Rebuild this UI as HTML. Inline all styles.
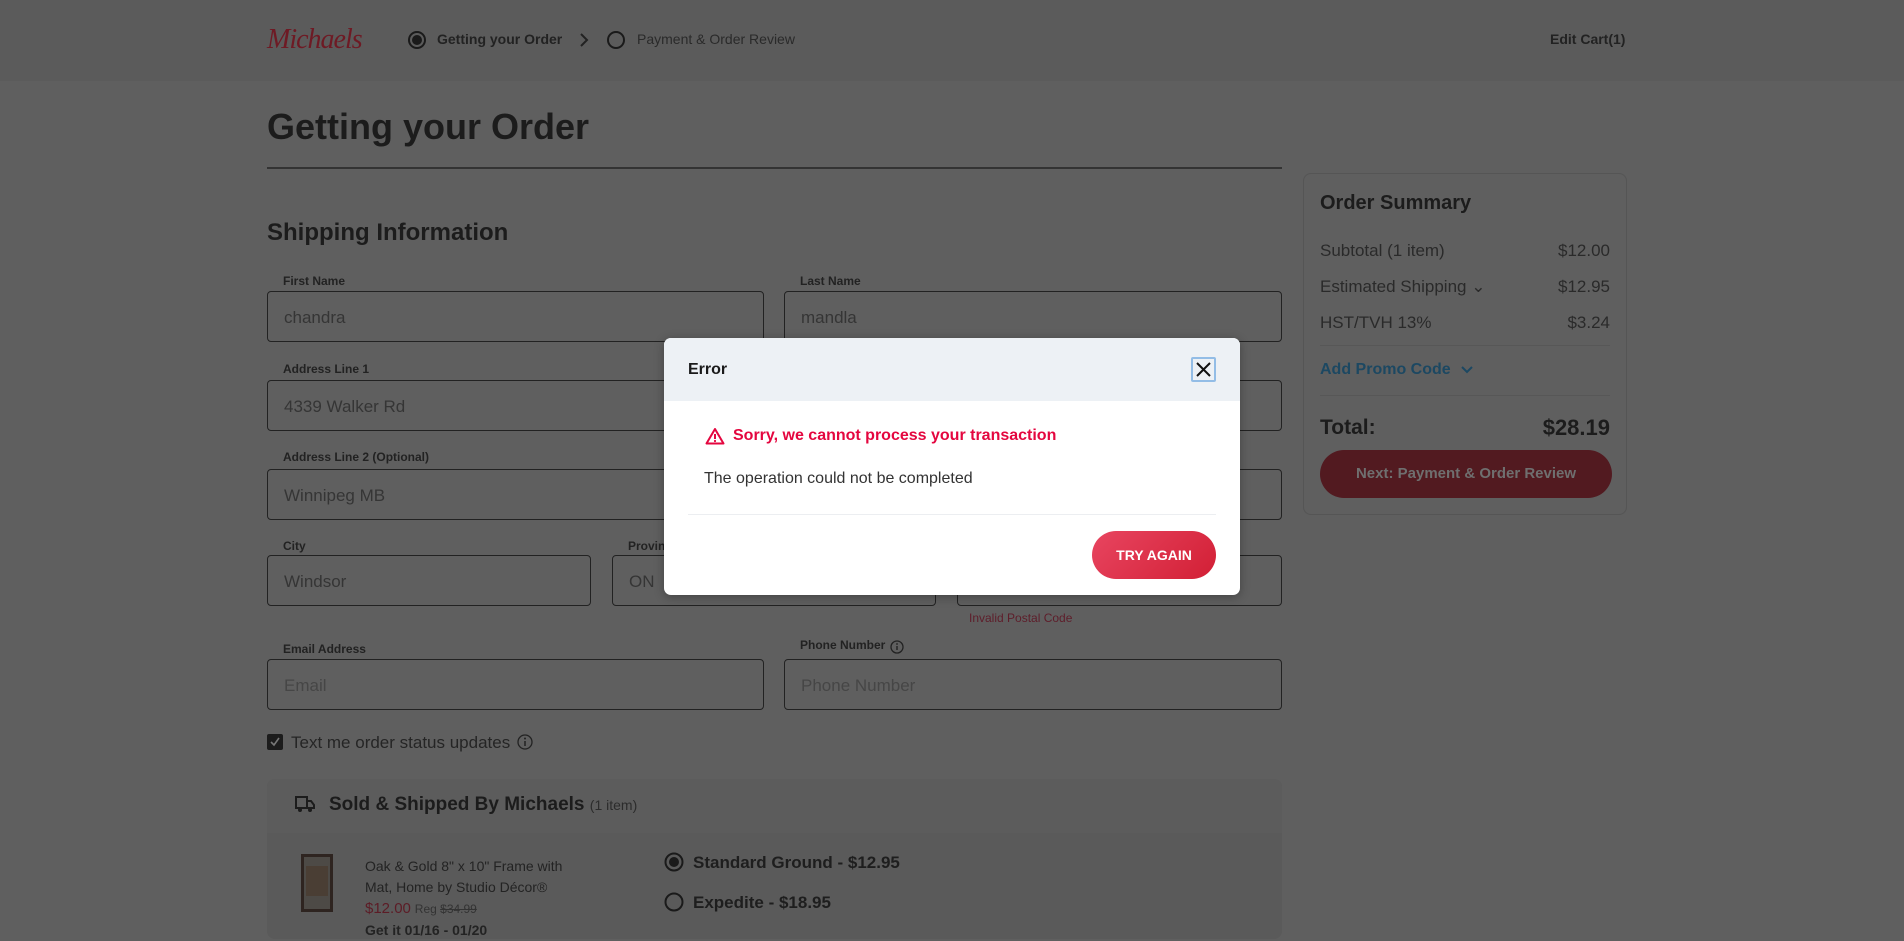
<!DOCTYPE html>
<html><head><meta charset="utf-8"><style>
*{box-sizing:border-box;margin:0;padding:0}
body{width:1904px;height:933px;overflow:hidden;background:#5f5f5f;font-family:"Liberation Sans",sans-serif;color:#1e1e1e;position:relative}
.a{position:absolute}
.hdr{left:0;top:0;width:1904px;height:81px;background:#5b5b5b}
.lbl{font-size:12px;font-weight:bold;color:#222}
.inp{border:1px solid #222;border-radius:4px;height:51px;font-size:17px;color:#353535;padding:16px 0 0 16px}
.ph{color:#464646}
.row{font-size:17px;color:#2a2a2a}
</style></head><body>
<div class="a hdr"></div>
<div class="a" style="left:267px;top:24px;font-family:'Liberation Serif',serif;font-style:italic;font-size:28px;letter-spacing:-1px;color:#6e1a24">Michaels</div>
<svg class="a" style="left:407px;top:30px" width="20" height="20"><circle cx="10" cy="10" r="8" fill="none" stroke="#1a1a1a" stroke-width="2"/><circle cx="10" cy="10" r="5" fill="#1a1a1a"/></svg>
<div class="a" style="left:437px;top:31px;font-size:14px;font-weight:bold;color:#222">Getting your Order</div>
<svg class="a" style="left:578px;top:32px" width="12" height="16"><path d="M3 2l6 6-6 6" fill="none" stroke="#222" stroke-width="2"/></svg>
<svg class="a" style="left:606px;top:30px" width="20" height="20"><circle cx="10" cy="10" r="8" fill="none" stroke="#1a1a1a" stroke-width="2"/></svg>
<div class="a" style="left:637px;top:31px;font-size:14px;color:#2a2a2a">Payment &amp; Order Review</div>
<div class="a" style="left:1550px;top:31px;font-size:14px;font-weight:bold;color:#222">Edit Cart(1)</div>

<div class="a" style="left:267px;top:106px;font-size:36px;font-weight:bold;color:#1c1c1c">Getting your Order</div>
<div class="a" style="left:267px;top:167px;width:1015px;height:2px;background:#333"></div>
<div class="a" style="left:267px;top:219px;font-size:24px;font-weight:bold;color:#1c1c1c">Shipping Information</div>

<div class="a lbl" style="left:283px;top:274px">First Name</div>
<div class="a inp" style="left:267px;top:291px;width:497px">chandra</div>
<div class="a lbl" style="left:800px;top:274px">Last Name</div>
<div class="a inp" style="left:784px;top:291px;width:498px">mandla</div>
<div class="a lbl" style="left:283px;top:362px">Address Line 1</div>
<div class="a inp" style="left:267px;top:380px;width:1015px">4339 Walker Rd</div>
<div class="a lbl" style="left:283px;top:450px">Address Line 2 (Optional)</div>
<div class="a inp" style="left:267px;top:469px;width:1015px">Winnipeg MB</div>
<div class="a lbl" style="left:283px;top:539px">City</div>
<div class="a inp" style="left:267px;top:555px;width:324px">Windsor</div>
<div class="a lbl" style="left:628px;top:539px">Province</div>
<div class="a inp" style="left:612px;top:555px;width:324px">ON</div>
<div class="a inp" style="left:957px;top:555px;width:325px"></div>
<div class="a" style="left:969px;top:611px;font-size:12px;color:#5e1d2a">Invalid Postal Code</div>
<div class="a lbl" style="left:283px;top:642px">Email Address</div>
<div class="a inp ph" style="left:267px;top:659px;width:497px">Email</div>
<div class="a lbl" style="left:800px;top:638px">Phone Number</div>
<svg class="a" style="left:890px;top:640px" width="14" height="14"><circle cx="7" cy="7" r="6" fill="none" stroke="#222" stroke-width="1.3"/><path d="M7 6v4" stroke="#222" stroke-width="1.4"/><circle cx="7" cy="4" r=".9" fill="#222"/></svg>
<div class="a inp ph" style="left:784px;top:659px;width:498px">Phone Number</div>
<div class="a" style="left:267px;top:734px;width:16px;height:16px;background:#1c1c1c;border-radius:2px"></div>
<svg class="a" style="left:269px;top:736px" width="12" height="12"><path d="M2 6l3 3 5-7" fill="none" stroke="#777" stroke-width="1.6"/></svg>
<div class="a" style="left:291px;top:733px;font-size:17px;color:#252525">Text me order status updates</div>
<svg class="a" style="left:517px;top:734px" width="16" height="16"><circle cx="8" cy="8" r="7" fill="none" stroke="#222" stroke-width="1.3"/><path d="M8 7v5" stroke="#222" stroke-width="1.5"/><circle cx="8" cy="4.5" r="1" fill="#222"/></svg>

<div class="a" style="left:267px;top:779px;width:1015px;height:160px;background:#5a5a5a;border-radius:8px"></div>
<div class="a" style="left:267px;top:779px;width:1015px;height:54px;background:#5c5c5c;border-radius:8px 8px 0 0"></div>
<svg class="a" style="left:294px;top:794px" width="22" height="20"><path d="M2 3h11v11H2zM13 7h4l3 4v3h-7" fill="none" stroke="#1c1c1c" stroke-width="2"/><circle cx="6" cy="16" r="2" fill="#1c1c1c"/><circle cx="16" cy="16" r="2" fill="#1c1c1c"/></svg>
<div class="a" style="left:329px;top:794px;font-size:19px;font-weight:bold;color:#1c1c1c">Sold &amp; Shipped By Michaels <span style="font-size:14px;font-weight:normal;color:#2c2c2c">(1 item)</span></div>
<div class="a" style="left:301px;top:854px;width:32px;height:58px;border:3px solid #2e2420;background:#4d4a46"></div>
<div class="a" style="left:306px;top:866px;width:22px;height:30px;background:#4a3e34"></div>
<div class="a" style="left:365px;top:856px;font-size:14px;line-height:21px;color:#232323">Oak &amp; Gold 8" x 10" Frame with<br>Mat, Home by Studio Décor®<br><span style="color:#5c1c26;font-size:15px">$12.00</span> <span style="font-size:12px;color:#333">Reg <s>$34.99</s></span><br><b>Get it 01/16 - 01/20</b></div>
<svg class="a" style="left:664px;top:852px" width="20" height="20"><circle cx="10" cy="10" r="8.5" fill="none" stroke="#1a1a1a" stroke-width="2"/><circle cx="10" cy="10" r="5" fill="#1a1a1a"/></svg>
<div class="a" style="left:693px;top:853px;font-size:17px;font-weight:bold;color:#1e1e1e">Standard Ground - $12.95</div>
<svg class="a" style="left:664px;top:892px" width="20" height="20"><circle cx="10" cy="10" r="8.5" fill="none" stroke="#1a1a1a" stroke-width="2"/></svg>
<div class="a" style="left:693px;top:893px;font-size:17px;font-weight:bold;color:#1e1e1e">Expedite - $18.95</div>

<div class="a" style="left:1303px;top:173px;width:324px;height:342px;border:1px solid #555;border-radius:8px"></div>
<div class="a" style="left:1320px;top:192px;font-size:20px;font-weight:bold;color:#1c1c1c">Order Summary</div>
<div class="a row" style="left:1320px;top:241px">Subtotal (1 item)</div><div class="a row" style="left:1400px;width:210px;text-align:right;top:241px">$12.00</div>
<div class="a row" style="left:1320px;top:277px">Estimated Shipping ⌄</div><div class="a row" style="left:1400px;width:210px;text-align:right;top:277px">$12.95</div>
<div class="a row" style="left:1320px;top:313px">HST/TVH 13%</div><div class="a row" style="left:1400px;width:210px;text-align:right;top:313px">$3.24</div>
<div class="a" style="left:1320px;top:345px;width:290px;height:1px;background:#575757"></div>
<div class="a" style="left:1320px;top:361px;font-size:16px;font-weight:bold;color:#1c4862">Add Promo Code</div>
<svg class="a" style="left:1460px;top:364px" width="14" height="12"><path d="M2 3l5 5 5-5" fill="none" stroke="#1c4862" stroke-width="2"/></svg>
<div class="a" style="left:1320px;top:395px;width:290px;height:1px;background:#575757"></div>
<div class="a" style="left:1320px;top:416px;font-size:21px;font-weight:bold;color:#1c1c1c">Total:</div>
<div class="a" style="left:1450px;width:160px;text-align:right;top:415px;font-size:22px;font-weight:bold;color:#1c1c1c">$28.19</div>
<div class="a" style="left:1320px;top:450px;width:292px;height:48px;border-radius:24px;background:#521a20;color:#6f6f6f;font-size:15px;font-weight:bold;text-align:center;line-height:48px">Next: Payment &amp; Order Review</div>

<div class="a" style="left:664px;top:338px;width:576px;height:257px;background:#fff;border-radius:7px;overflow:hidden;box-shadow:0 2px 10px rgba(0,0,0,.3)">
 <div style="height:63px;background:#edf1f5;position:relative">
  <div class="a" style="left:24px;top:23px;font-size:16px;font-weight:bold;color:#1a1a1a">Error</div>
  <div class="a" style="left:527px;top:19px;width:25px;height:25px;border:2px solid #93bde6;border-radius:2px"></div>
  <svg class="a" style="left:531px;top:23px" width="17" height="17"><path d="M2 2l13 13M15 2L2 15" stroke="#111" stroke-width="2"/></svg>
 </div>
 <svg class="a" style="left:41px;top:89px" width="20" height="18"><path d="M10 2L1.5 16.5h17z" fill="none" stroke="#e4063f" stroke-width="2" stroke-linejoin="round"/><path d="M10 7v5" stroke="#e4063f" stroke-width="2"/><circle cx="10" cy="14" r="1.1" fill="#e4063f"/></svg>
 <div class="a" style="left:69px;top:89px;font-size:16px;font-weight:bold;color:#e4063f">Sorry, we cannot process your transaction</div>
 <div class="a" style="left:40px;top:132px;font-size:16px;color:#333">The operation could not be completed</div>
 <div class="a" style="left:24px;top:176px;width:528px;height:1px;background:#eceef1"></div>
 <div class="a" style="left:428px;top:193px;width:124px;height:48px;border-radius:24px;background:linear-gradient(135deg,#e84560,#d21f35);color:#fff;font-size:14px;font-weight:bold;text-align:center;line-height:48px">TRY AGAIN</div>
</div>
</body></html>
